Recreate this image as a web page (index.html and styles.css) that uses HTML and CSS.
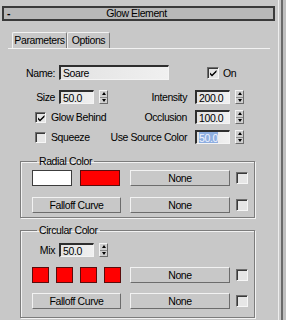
FILE: index.html
```html
<!DOCTYPE html>
<html lang="en">
<head>
  <meta charset="UTF-8">
  <title>Glow Element</title>
  <link rel="stylesheet" href="styles.css">
</head>
<body>
  <div class="Window">
    <div class="Rollout">
      <div class="RolloutHeader">
        <span class="Collapse">-</span>
        <span class="RolloutTitle">Glow Element</span>
      </div>

      <div class="TabStrip">
        <div class="Tab active">Parameters</div>
        <div class="Tab">Options</div>
      </div>

      <div class="TabPanel">
        <div class="Row NameRow">
          <span class="Label">Name:</span>
          <div class="Edit NameEdit">Soare</div>
          <span class="Check checked OnCheck"></span>
          <span class="CheckText">On</span>
        </div>

        <div class="Row">
          <div class="Left">
            <span class="Label">Size</span>
            <div class="Edit">50.0</div>
            <span class="Spinner"><span class="SpinUp"></span><span class="SpinDown"></span></span>
          </div>
          <span class="RightLabel">Intensity</span>
          <div class="Edit">200.0</div>
          <span class="Spinner"><span class="SpinUp"></span><span class="SpinDown"></span></span>
        </div>

        <div class="Row">
          <div class="Left">
            <span class="Check checked LeftCheck"></span>
            <span class="CheckText">Glow Behind</span>
          </div>
          <span class="RightLabel">Occlusion</span>
          <div class="Edit">100.0</div>
          <span class="Spinner"><span class="SpinUp"></span><span class="SpinDown"></span></span>
        </div>

        <div class="Row">
          <div class="Left">
            <span class="Check LeftCheck"></span>
            <span class="CheckText">Squeeze</span>
          </div>
          <span class="RightLabel">Use Source Color</span>
          <div class="Edit"><span class="Selected">50.0</span></div>
          <span class="Spinner"><span class="SpinUp"></span><span class="SpinDown"></span></span>
        </div>

        <fieldset class="Group RadialGroup">
          <legend>Radial Color</legend>
          <div class="GroupRow">
            <span class="Swatch white"></span>
            <span class="Swatch red second"></span>
            <button class="Button MapButton">None</button>
            <span class="Check MapCheck"></span>
          </div>
          <div class="GroupRow spaced">
            <button class="Button CurveButton">Falloff Curve</button>
            <button class="Button MapButton">None</button>
            <span class="Check MapCheck"></span>
          </div>
        </fieldset>

        <fieldset class="Group CircularGroup">
          <legend>Circular Color</legend>
          <div class="GroupRow MixRow">
            <span class="Label MixLabel">Mix</span>
            <div class="Edit">50.0</div>
            <span class="Spinner"><span class="SpinUp"></span><span class="SpinDown"></span></span>
          </div>
          <div class="GroupRow spaced">
            <div class="SwatchStrip">
              <span class="Swatch red small"></span>
              <span class="Swatch red small"></span>
              <span class="Swatch red small"></span>
              <span class="Swatch red small"></span>
            </div>
            <button class="Button MapButton">None</button>
            <span class="Check MapCheck"></span>
          </div>
          <div class="GroupRow spaced">
            <button class="Button CurveButton">Falloff Curve</button>
            <button class="Button MapButton">None</button>
            <span class="Check MapCheck"></span>
          </div>
        </fieldset>
      </div>
    </div>
    <div class="ScrollEdge"></div>
  </div>
</body>
</html>
```

FILE: styles.css
```css
* {
  margin: 0;
  padding: 0;
  box-sizing: border-box;
}

body {
  font-family: 'Liberation Sans', Arial, sans-serif;
  font-size: 10.5px;
  letter-spacing: -0.4px;
  white-space: nowrap;
  color: #000;
  background: #c8c8c8;
  width: 286px;
  height: 320px;
  overflow: hidden;
}

.Window {
  display: flex;
  height: 320px;
}

.Rollout {
  width: 278px;
}

/* Rollout header */
.RolloutHeader {
  margin: 6px 0 0 2px;
  width: 273px;
  height: 15px;
  border: 2px solid #3a3a3a;
  background: #b8b8b8;
  display: flex;
  align-items: center;
}

.Collapse {
  margin-left: 3px;
  font-weight: bold;
  line-height: 11px;
}

.RolloutTitle {
  flex: 1;
  text-align: center;
  line-height: 11px;
  margin-right: 10px;
}

/* Tabs */
.TabStrip {
  display: flex;
  margin: 11px 0 0 12px;
}

.Tab {
  height: 16px;
  line-height: 15px;
  text-align: center;
  border-top: 1px solid #f2f2f2;
  border-left: 1px solid #f2f2f2;
  border-right: 1px solid #7a7a7a;
  border-radius: 2px 2px 0 0;
}

.Tab.active {
  width: 55px;
}

.Tab:not(.active) {
  width: 43px;
}

.TabPanel {
  margin-left: 8px;
  width: 262px;
  border-top: 1px solid #f2f2f2;
}

/* Rows */
.Row {
  display: flex;
  align-items: center;
  height: 14px;
  margin-top: 6px;
}

.NameRow {
  height: 15px;
  margin-top: 16px;
}

.NameRow + .Row {
  margin-top: 10px;
}

.Left {
  width: 101px;
  display: flex;
  align-items: center;
}

.Label {
  width: 47px;
  margin-right: 4px;
  text-align: right;
}

.RightLabel {
  width: 78px;
  margin-right: 8px;
  text-align: right;
}

.Edit {
  width: 35px;
  height: 14px;
  line-height: 12px;
  padding-left: 2px;
  background: linear-gradient(90deg, #e2e2e2, #f0f0f0);
  border-top: 2px solid #2e2e2e;
  border-left: 2px solid #2e2e2e;
  border-right: 1px solid #f4f4f4;
  border-bottom: 1px solid #f4f4f4;
  overflow: hidden;
}

.NameEdit {
  width: 110px;
  height: 15px;
}

.Selected {
  background: #8eaee0;
  color: #eef3ff;
}

/* Spinner */
.Spinner {
  width: 9px;
  height: 14px;
  margin-left: 5px;
  display: flex;
  flex-direction: column;
  background: #cfcfcf;
  border-top: 1px solid #f4f4f4;
  border-left: 1px solid #f4f4f4;
  border-right: 1px solid #6c6c6c;
  border-bottom: 1px solid #6c6c6c;
}

.SpinUp,
.SpinDown {
  flex: 1;
  display: flex;
  align-items: center;
  justify-content: center;
}

.SpinUp {
  border-bottom: 1px solid #8a8a8a;
}

.SpinUp::after {
  content: '';
  border-left: 2px solid transparent;
  border-right: 2px solid transparent;
  border-bottom: 3px solid #000;
}

.SpinDown::after {
  content: '';
  border-left: 2px solid transparent;
  border-right: 2px solid transparent;
  border-top: 3px solid #000;
}

/* Checkboxes */
.Check {
  width: 12px;
  height: 12px;
  background: #e6e6e6;
  border-top: 1px solid #6e6e6e;
  border-left: 1px solid #6e6e6e;
  border-right: 1px solid #f6f6f6;
  border-bottom: 1px solid #f6f6f6;
  box-shadow: inset 1px 1px 0 #3a3a3a;
  flex-shrink: 0;
}

.Check.checked {
  background: #e6e6e6 url("data:image/svg+xml,%3Csvg xmlns='http://www.w3.org/2000/svg' width='10' height='10'%3E%3Cpath d='M2 4.5 L4 6.5 L8.5 2 L8.5 4 L4 8.5 L2 6.5 Z' fill='%23000'/%3E%3C/svg%3E") no-repeat 0 0;
}

.OnCheck {
  margin-left: 38px;
}

.LeftCheck {
  width: 11px;
  height: 11px;
  margin-left: 27px;
}

.CheckText {
  margin-left: 5px;
}

.NameRow .CheckText {
  margin-left: 4px;
}

/* Groups */
.Group {
  margin: 11px 0 0 12px;
  width: 235px;
  min-width: 0;
  border: 1px solid #7c7c7c;
  box-shadow: 1px 1px 0 #f2f2f2, inset 1px 1px 0 #f2f2f2;
  padding: 2px 0 4px 11px;
}

.Group legend {
  margin-left: 5px;
  padding: 0 2px;
  line-height: 13px;
}

.CircularGroup {
  margin-top: 6px;
  padding-top: 6px;
  padding-bottom: 8px;
}

.GroupRow {
  display: flex;
  align-items: center;
  height: 16px;
}

.GroupRow.spaced {
  margin-top: 11px;
}

.CircularGroup .GroupRow.spaced {
  margin-top: 10px;
}

.MixRow {
  height: 14px;
}

.MixLabel {
  width: 23px;
}

.Swatch {
  width: 40px;
  height: 16px;
  border: 1px solid #3c3c3c;
}

.Swatch.white {
  background: #fff;
}

.Swatch.red {
  background: #f00;
  border-color: #5a0c0c;
}

.Swatch.second {
  margin-left: 8px;
}

.SwatchStrip {
  width: 89px;
  display: flex;
  justify-content: space-between;
}

.Swatch.small {
  width: 17px;
}

.Button {
  font: inherit;
  letter-spacing: inherit;
  color: #000;
  height: 16px;
  background: #c8c8c8;
  border-top: 1px solid #f2f2f2;
  border-left: 1px solid #f2f2f2;
  border-right: 1px solid #6c6c6c;
  border-bottom: 1px solid #6c6c6c;
  line-height: 14px;
}

.MapButton {
  width: 100px;
  margin-left: 9px;
}

.GroupRow .Swatch.second + .MapButton {
  margin-left: 10px;
}

.CurveButton {
  width: 89px;
}

.MapCheck {
  margin-left: 6px;
}

/* Right edge */
.ScrollEdge {
  width: 8px;
  border-left: 1px solid #eeeeee;
  box-shadow: inset 2px 0 0 #c8c8c8, inset 4px 0 0 #6a6a6a;
  background: #c0c0c0;
}
```
